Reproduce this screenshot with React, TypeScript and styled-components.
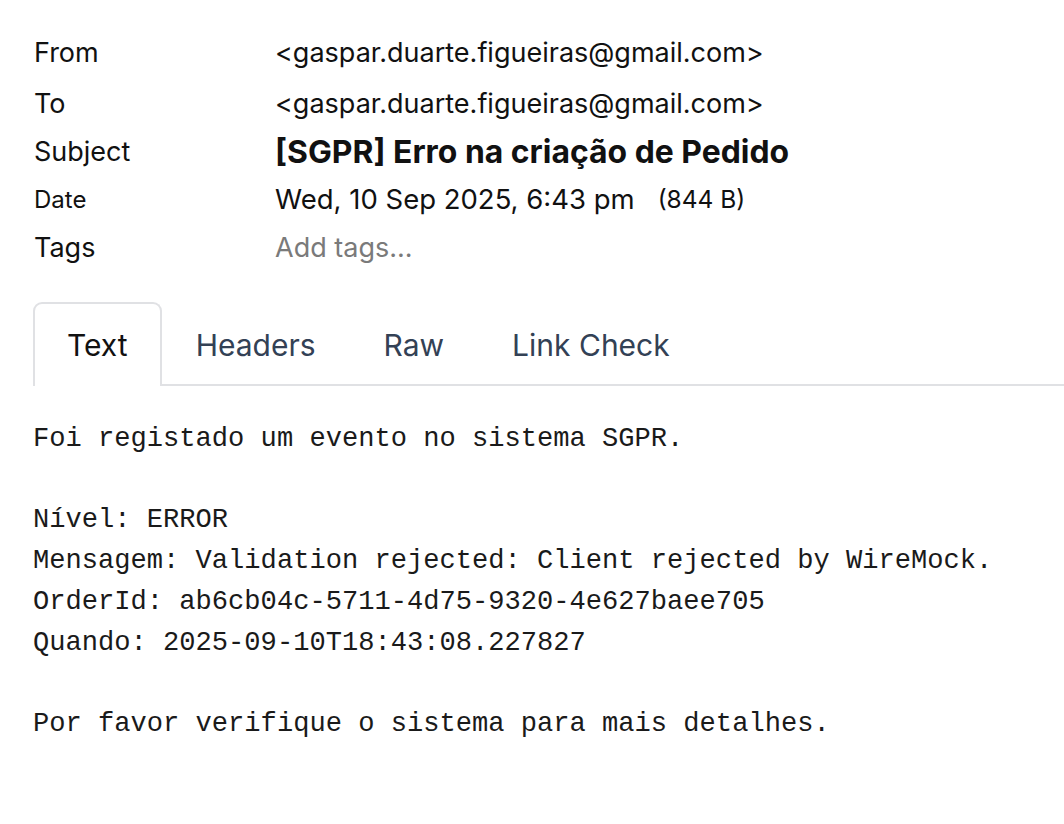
import React from 'react'
import styled, { createGlobalStyle } from 'styled-components'

const Global = createGlobalStyle`
  body {
    margin: 0;
    background: #fff;
    font-family: Inter, "Noto Sans", sans-serif;
    color: #111;
  }
`

const Page = styled.div`
  padding: 25px 0 0 33px;
`

const Meta = styled.div`
  display: grid;
  grid-template-columns: 241px 1fr;
  grid-template-rows: 54px repeat(4, 48px);
  padding-left: 1px;
`

const Label = styled.div<{ $size?: number }>`
  font-size: ${(p) => p.$size || 27}px;
  display: flex;
  align-items: center;
  color: #111;
`

const Value = styled.div<{ $size?: number; $bold?: boolean; $muted?: boolean }>`
  font-size: ${(p) => p.$size || 27}px;
  font-weight: ${(p) => (p.$bold ? 700 : 400)};
  color: ${(p) => (p.$muted ? '#7a7a7a' : '#111')};
  display: flex;
  align-items: center;
  gap: 23px;
`

const Size = styled.span`
  font-size: 24.5px;
`

const Tabs = styled.div`
  display: flex;
  margin-top: 31px;
  border-bottom: 2px solid #e0e1e4;
`

// every tab hangs 2px over the strip's bottom rule; only the active one is opaque
const Tab = styled.div<{ $active?: boolean }>`
  font-size: 30px;
  padding: 0 32px;
  height: 82px;
  margin-bottom: -2px;
  display: flex;
  align-items: center;
  color: ${(p) => (p.$active ? '#111' : '#334155')};
  border: 2px solid ${(p) => (p.$active ? '#e0e1e4' : 'transparent')};
  border-bottom: none;
  border-radius: 9px 9px 0 0;
  background: ${(p) => (p.$active ? '#fff' : 'transparent')};
`

const Body = styled.pre`
  margin: 33px 0 0 0;
  font-family: "Liberation Mono", "Courier New", monospace;
  font-size: 27.1px;
  line-height: 40.7px;
  color: #1a1a1a;
`

export default function App() {
  return (
    <Page>
      <Global />
      <Meta>
        <Label>From</Label>
        <Value>&lt;gaspar.duarte.figueiras@gmail.com&gt;</Value>
        <Label>To</Label>
        <Value>&lt;gaspar.duarte.figueiras@gmail.com&gt;</Value>
        <Label>Subject</Label>
        <Value $size={31.9} $bold>[SGPR] Erro na criação de Pedido</Value>
        <Label $size={24}>Date</Label>
        <Value $size={27.5}>
          Wed, 10 Sep 2025, 6:43 pm <Size>(844 B)</Size>
        </Value>
        <Label>Tags</Label>
        <Value $muted>Add tags...</Value>
      </Meta>
      <Tabs>
        <Tab $active>Text</Tab>
        <Tab>Headers</Tab>
        <Tab>Raw</Tab>
        <Tab>Link Check</Tab>
      </Tabs>
      <Body>{`Foi registado um evento no sistema SGPR.

Nível: ERROR
Mensagem: Validation rejected: Client rejected by WireMock.
OrderId: ab6cb04c-5711-4d75-9320-4e627baee705
Quando: 2025-09-10T18:43:08.227827

Por favor verifique o sistema para mais detalhes.`}</Body>
    </Page>
  )
}
